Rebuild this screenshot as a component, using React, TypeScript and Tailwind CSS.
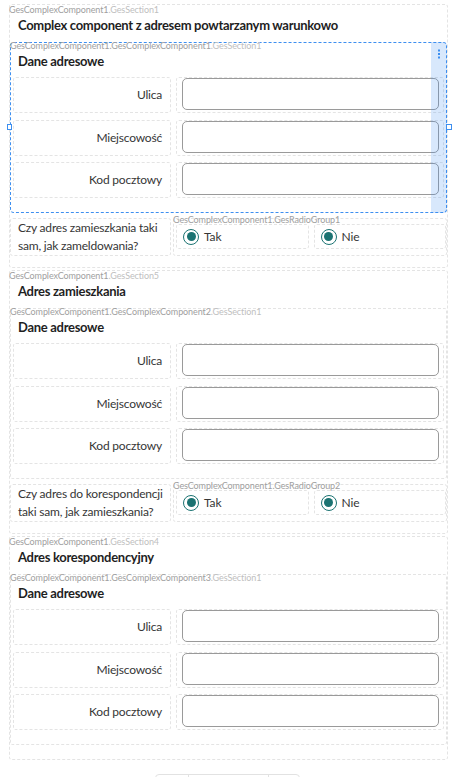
import React from "react";

function Tag({ dark, light, className }: { dark: string; light?: string; className: string }) {
  return (
    <div className={className}>
      <span className="text-[#a0a0a0]">{dark}</span>
      {light ? <span className="text-[#c0c0c0]">{light}</span> : null}
    </div>
  );
}

function Row({ label }: { label: string }) {
  return (
    <div className="flex h-[36px] gap-[5px]">
      <div className="w-[158px] shrink-0 border border-dashed border-[#e4e4e4] rounded-[3px] flex items-center justify-end pr-[8px] text-[12px] tracking-[-0.2px] text-[#363636]">
        {label}
      </div>
      <div className="flex-1 border border-dashed border-[#e4e4e4] rounded-[3px] pl-[5px] pr-[4px]">
        <div className="h-[32px] border border-[#9a9a9a] rounded-[5px] bg-white" />
      </div>
    </div>
  );
}

function Complex({ n, selected }: { n: string; selected?: boolean }) {
  return (
    <div
      className={
        selected
          ? "relative border border-dashed border-[#3d8ff0] rounded-[4px] px-[2px] pt-[8px] pb-[14px]"
          : "relative border border-dashed border-[#e4e4e4] rounded-[3px] px-[2px] pt-[8px] pb-[14px]"
      }
    >
      <Tag
        dark={"GesComplexComponent1.GesComplexComponent" + n}
        light=".GesSection1"
        className="absolute left-[-1px] top-[-2px] text-[9px] leading-[10px] tracking-[-0.1px] whitespace-nowrap"
      />
      <div className="h-[20px] leading-[20px] pl-[5px] text-[13px] tracking-[-0.3px] font-bold text-[#1f1f1f]">
        Dane adresowe
      </div>
      <div className="mt-[6px] flex flex-col gap-[6.5px]">
        <Row label="Ulica" />
        <Row label="Miejscowość" />
        <Row label="Kod pocztowy" />
      </div>
      {selected ? (
        <>
          <div className="absolute right-[-1px] top-[-1px] bottom-[-1px] w-[16px] bg-[#3b8cf0]/20 rounded-tr-[4px] rounded-br-[4px]">
            <svg className="absolute left-[5px] top-[7px]" width="6" height="10" viewBox="0 0 6 10">
              <rect x="2" y="0.5" width="2" height="2" fill="#3d8ff0" />
              <rect x="2" y="4" width="2" height="2" fill="#3d8ff0" />
              <rect x="2" y="7.5" width="2" height="2" fill="#3d8ff0" />
            </svg>
          </div>
          <div className="absolute left-[-4px] top-[81px] w-[5px] h-[6px] border border-[#3d8ff0] bg-white" />
          <div className="absolute right-[-6px] top-[81px] w-[6px] h-[6px] border border-[#3d8ff0] bg-white" />
        </>
      ) : null}
    </div>
  );
}

function Radio({ label }: { label: string }) {
  return (
    <div className="flex-1 border border-dashed border-[#e4e4e4] rounded-[3px] flex items-center pl-[6px] gap-[5px]">
      <div className="w-[16px] h-[16px] rounded-full border-[1.5px] border-[#1b7372] flex items-center justify-center bg-white">
        <div className="w-[9px] h-[9px] rounded-full bg-[#1b7372]" />
      </div>
      <span className="text-[12px] tracking-[-0.1px] text-[#363636]">{label}</span>
    </div>
  );
}

function Question({ l1, l2, group }: { l1: string; l2: string; group: string }) {
  return (
    <div className="flex gap-[2px] mt-[5px] h-[38px]">
      <div className="w-[161px] shrink-0 border border-dashed border-[#e4e4e4] rounded-[3px] pl-[7px] flex flex-col justify-center text-[12px] tracking-[-0.2px] leading-[18px] text-[#363636] whitespace-nowrap">
        <span>{l1}</span>
        <span>{l2}</span>
      </div>
      <div className="relative flex-1 border border-dashed border-[#e4e4e4] rounded-[3px] pl-[2px] pt-[5px] pb-[6px] flex gap-[5px]">
        <Tag
          dark={"GesComplexComponent1." + group}
          className="absolute left-[-1px] top-[-4px] text-[9px] leading-[10px] tracking-[-0.1px] whitespace-nowrap"
        />
        <Radio label="Tak" />
        <Radio label="Nie" />
      </div>
    </div>
  );
}

function Section({
  n,
  title,
  children,
  className,
}: {
  n: string;
  title: string;
  children: React.ReactNode;
  className: string;
}) {
  return (
    <div className={className}>
      <Tag
        dark="GesComplexComponent1"
        light={".GesSection" + n}
        className="absolute left-[-1px] top-[0px] text-[9px] leading-[10px] tracking-[-0.1px] whitespace-nowrap"
      />
      <div className="h-[20px] leading-[20px] pl-[8px] text-[13px] tracking-[-0.3px] font-bold text-[#1f1f1f]">
        {title}
      </div>
      <div className="mt-[7px]">{children}</div>
    </div>
  );
}

export default function App() {
  return (
    <div className="w-[460px] h-[777px] overflow-hidden bg-white [font-family:Lato,'Noto_Sans',sans-serif]">
      <div className="w-[439px] ml-[9px] pt-[4px] flex flex-col gap-[2px]">
        <Section
          n="1"
          title="Complex component z adresem powtarzanym warunkowo"
          className="relative border border-dashed border-[#e4e4e4] rounded-[3px] pt-[10px] pb-[11px]"
        >
          <Complex n="1" selected />
          <Question l1="Czy adres zamieszkania taki" l2="sam, jak zameldowania?" group="GesRadioGroup1" />
        </Section>
        <Section
          n="5"
          title="Adres zamieszkania"
          className="relative border border-dashed border-[#e4e4e4] rounded-[3px] pt-[10px] pb-[11px]"
        >
          <Complex n="2" />
          <Question l1="Czy adres do korespondencji" l2="taki sam, jak zamieszkania?" group="GesRadioGroup2" />
        </Section>
        <Section
          n="4"
          title="Adres korespondencyjny"
          className="relative border border-dashed border-[#e4e4e4] rounded-[3px] pt-[10px] pb-[14px]"
        >
          <Complex n="3" />
        </Section>
      </div>
      <div className="mt-[14px] ml-[155px] flex w-[145px] h-[30px] border border-[#e2e2e2] rounded-[4px]">
        <div className="w-[33px] border-r border-[#e2e2e2]" />
        <div className="w-[80px] border-r border-[#e2e2e2]" />
        <div className="flex-1" />
      </div>
    </div>
  );
}
